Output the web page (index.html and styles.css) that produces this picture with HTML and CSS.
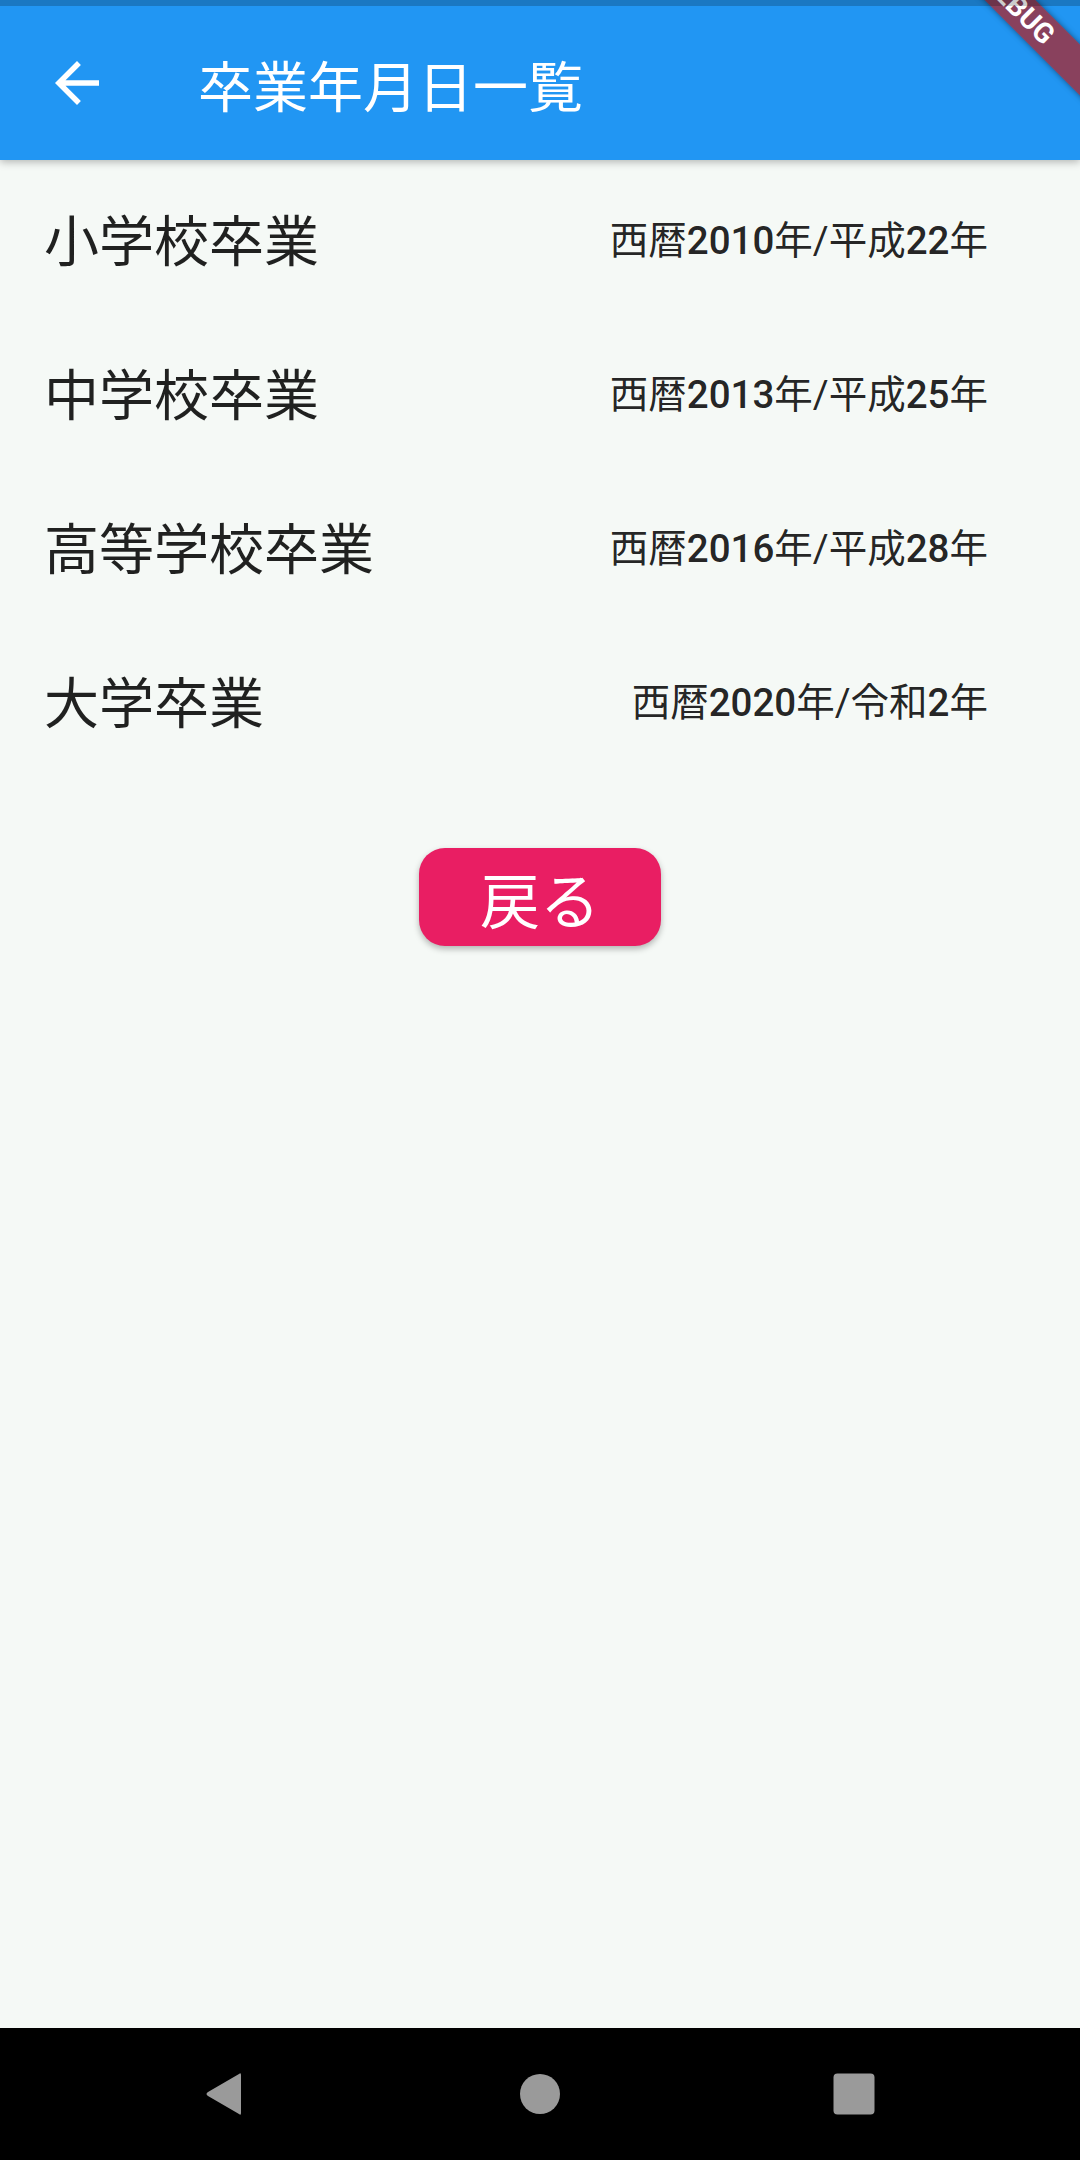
FILE: index.html
```html
<!DOCTYPE html>
<html>
<head>
  <meta charset="utf-8">
  <title>卒業年月日一覧</title>
  <link rel="stylesheet" href="styles.css">
</head>
<body>
  <div class="status-shade"></div>
  <div class="debug-banner">DEBUG</div>

  <header class="app-bar">
    <div class="leading">
      <svg class="back-icon" viewBox="0 0 24 24" xmlns="http://www.w3.org/2000/svg">
        <path d="M20 11H7.83l5.59-5.59L12 4l-8 8 8 8 1.41-1.41L7.83 13H20v-2z" fill="#ffffff"/>
      </svg>
    </div>
    <h1 class="title">卒業年月日一覧</h1>
  </header>

  <main class="content">
    <ul class="grad-list">
      <li class="grad-row">
        <span class="school">小学校卒業</span>
        <span class="date">西暦<span class="num">2010</span>年/平成<span class="num">22</span>年</span>
      </li>
      <li class="grad-row">
        <span class="school">中学校卒業</span>
        <span class="date">西暦<span class="num">2013</span>年/平成<span class="num">25</span>年</span>
      </li>
      <li class="grad-row">
        <span class="school">高等学校卒業</span>
        <span class="date">西暦<span class="num">2016</span>年/平成<span class="num">28</span>年</span>
      </li>
      <li class="grad-row">
        <span class="school">大学卒業</span>
        <span class="date">西暦<span class="num">2020</span>年/令和<span class="num">2</span>年</span>
      </li>
    </ul>

    <div class="actions">
      <button class="back-button">戻る</button>
    </div>
  </main>

  <!-- android navigation bar -->
  <nav class="nav-bar">
    <svg class="nav-icon" viewBox="0 0 44 44" xmlns="http://www.w3.org/2000/svg">
      <path d="M35 2 Q37 0 37 3 V41 Q37 44 35 42 L4 24 Q1 22 4 20 Z" fill="#9a9a9a"/>
    </svg>
    <svg class="nav-icon" viewBox="0 0 44 44" xmlns="http://www.w3.org/2000/svg">
      <circle cx="22" cy="22" r="20" fill="#9a9a9a"/>
    </svg>
    <svg class="nav-icon" viewBox="0 0 44 44" xmlns="http://www.w3.org/2000/svg">
      <rect x="1.5" y="1.5" width="41" height="41" rx="4" fill="#9a9a9a"/>
    </svg>
  </nav>
</body>
</html>
```

FILE: styles.css
```css
html {
  background: #f5f9f6;
  overflow: hidden;
}

body {
  margin: 0;
  width: 1080px;
  height: 2160px;
  display: flex;
  flex-direction: column;
  position: relative;
  overflow: hidden;
  font-family: Roboto, "Noto Sans CJK JP", sans-serif;
  color: rgba(0, 0, 0, 0.87);
}

/* STATUS BAR STRIP (darkens whatever is under it) */
.status-shade {
  position: absolute;
  top: 0;
  left: 0;
  right: 0;
  height: 6px;
  background: rgba(0, 0, 0, 0.2);
  z-index: 20;
}

/* FLUTTER DEBUG RIBBON */
.debug-banner {
  position: absolute;
  top: -10px;
  left: 868px;
  width: 300px;
  height: 36px;
  line-height: 36px;
  text-align: center;
  transform: rotate(45deg);
  background: rgba(183, 28, 28, 0.7);
  box-shadow: 0 0 6px rgba(0, 0, 0, 0.45);
  color: #ffffff;
  font-family: Roboto, sans-serif;
  font-weight: bold;
  font-size: 28px;
  z-index: 10;
}

/* APP BAR */
.app-bar {
  height: 154px;
  padding-top: 6px;
  background: #2196F3;
  display: flex;
  align-items: center;
  box-shadow: 0 2px 8px rgba(0, 0, 0, 0.28);
  position: relative;
  z-index: 5;
}

.leading {
  width: 154px;
  height: 154px;
  display: flex;
  align-items: center;
  padding-left: 44px;
  box-sizing: border-box;
}

.back-icon {
  width: 66px;
  height: 66px;
}

.title {
  margin: 0 0 0 44px;
  color: #ffffff;
  font-size: 55px;
  font-weight: 400;
}

/* LIST */
.content {
  flex: 1;
}

.grad-list {
  list-style: none;
  margin: 0;
  padding: 0;
}

.grad-row {
  height: 154px;
  padding: 0 44px;
  display: flex;
  align-items: center;
  justify-content: space-between;
}

.school {
  font-size: 55px;
}

.date {
  font-size: 38.5px;
  margin-right: 48px;
}

.date .num {
  font-weight: 500;
}

/* BUTTON */
.actions {
  display: flex;
  justify-content: center;
  padding-top: 72px;
}

.back-button {
  width: 242px;
  height: 98px;
  border: none;
  border-radius: 26px;
  background: #E91E63;
  color: #ffffff;
  font-family: Roboto, "Noto Sans CJK JP", sans-serif;
  font-size: 60px;
  padding: 0;
  box-shadow: 0 3px 6px rgba(0, 0, 0, 0.28);
}

/* NAV BAR */
.nav-bar {
  height: 132px;
  background: #000000;
  display: flex;
  align-items: center;
  justify-content: center;
  gap: 270px;
}

.nav-icon {
  width: 44px;
  height: 44px;
}
```
